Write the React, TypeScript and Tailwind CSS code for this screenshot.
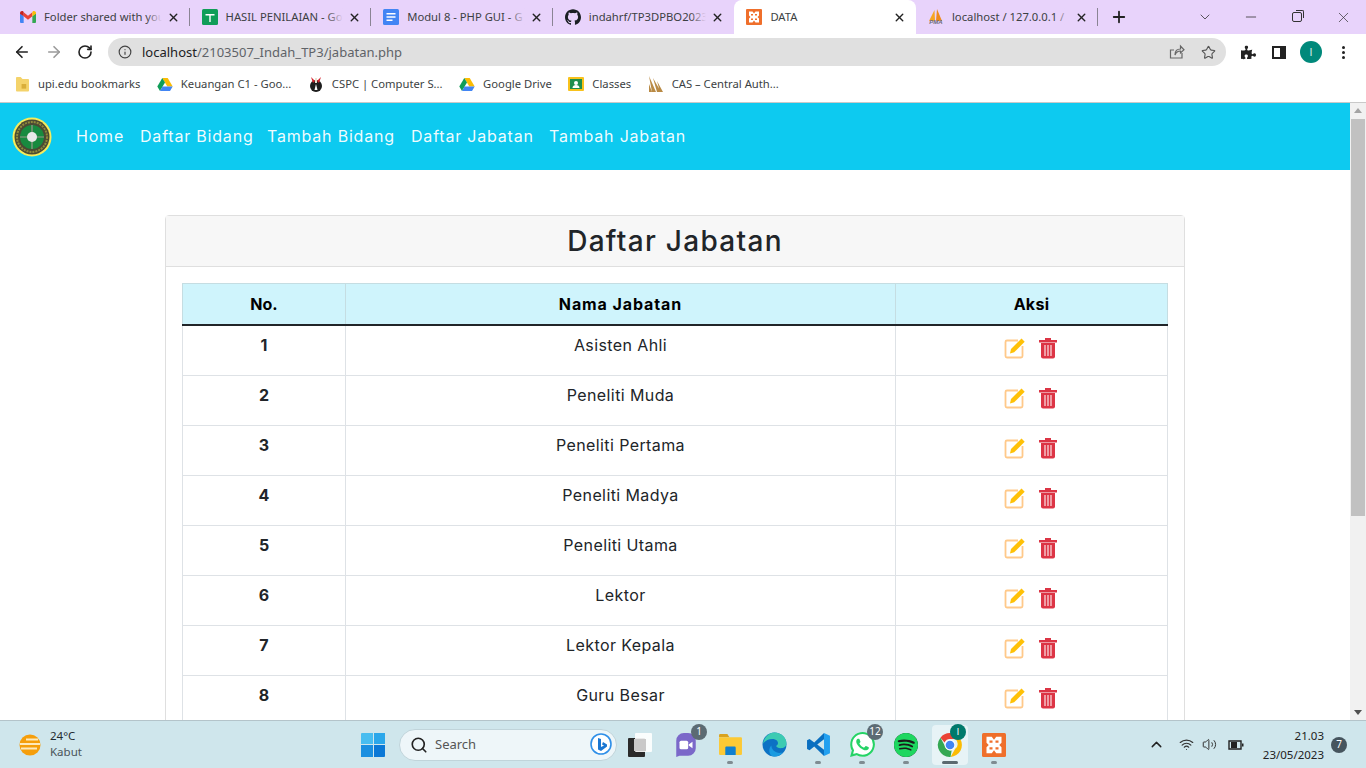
import { ReactNode } from 'react';
import { ArrowLeft, ArrowRight, ChevronDown, ChevronUp, Info, Minus, Plus, RotateCw, Search, Star, Volume2, Wifi, X } from 'lucide-react';
import { FaPuzzlePiece } from 'react-icons/fa';
import { SiGithub, SiSpotify, SiWhatsapp } from 'react-icons/si';

const jabatan = [
  'Asisten Ahli',
  'Peneliti Muda',
  'Peneliti Pertama',
  'Peneliti Madya',
  'Peneliti Utama',
  'Lektor',
  'Lektor Kepala',
  'Guru Besar',
];

const navLinks = [
  { label: 'Home', width: 'w-[64px]' },
  { label: 'Daftar Bidang', width: 'w-[127px]' },
  { label: 'Tambah Bidang', width: 'w-[144px]' },
  { label: 'Daftar Jabatan', width: 'w-[138px]' },
  { label: 'Tambah Jabatan', width: 'w-[156px]' },
];

function GmailIcon() {
  return (
    <svg viewBox="0 0 24 18" className="w-4 h-3">
      <path d="M0 3v13.5A1.5 1.5 0 0 0 1.5 18H5.5V8l-5.500-5z" fill="#4285f4" />
      <path d="M24 3v13.500a1.500 1.500 0 0 1-1.500 1.500H18.500V8l5.500-5z" fill="#34a853" />
      <path d="M5.500 8V2L12 7l6.500-5v6L12 13z" fill="#ea4335" />
      <path d="M0 3c0-2.500 3-3.800 5-2.200L5.500 2v6L0 4z" fill="#c5221f" />
      <path d="M24 3c0-2.500-3-3.800-5-2.200L18.500 2v6L24 4z" fill="#fbbc04" />
    </svg>
  );
}

function SheetsIcon() {
  return (
    <svg viewBox="0 0 16 16" className="w-4 h-4">
      <rect width="16" height="16" rx="1.500" fill="#0f9d58" />
      <path d="M3.500 5h9v1.500H8.700V13H7.300V6.500H3.500z" fill="#fff" />
    </svg>
  );
}

function DocsIcon() {
  return (
    <svg viewBox="0 0 16 16" className="w-4 h-4">
      <rect width="16" height="16" rx="1.500" fill="#4285f4" />
      <path d="M3.500 4h9v1.500h-9zM3.500 7.200h9v1.500h-9zM3.500 10.400h6v1.500h-6z" fill="#fff" />
    </svg>
  );
}

function XamppIcon({ big }: { big?: boolean }) {
  return (
    <svg viewBox="0 0 16 16" className={big ? 'w-6 h-6' : 'w-4 h-4'}>
      <rect width="16" height="16" rx="1" fill="#ef6f2b" />
      <path d="M3 2.500h3.500L8 4.500l1.500-2H13v4L11.500 8 13 9.500v4H9.500L8 11.500l-1.500 2H3v-4L4.500 8 3 6.500z" fill="#fff" />
      <path d="M5 5h2v1.500H5zM9 5h2v1.500H9zM5 9.500h2V11H5zM9 9.500h2V11H9z" fill="#ef6f2b" />
    </svg>
  );
}

function PmaIcon() {
  return (
    <span className="relative flex w-[18px] h-4 justify-center">
      <svg viewBox="0 0 18 12" className="w-[18px] h-3">
        <path d="M2 12 7.500 1 8 12z" fill="#f6a623" />
        <path d="M9 12 10 0l5 12z" fill="#ee8a1d" />
      </svg>
      <span className="absolute bottom-[-1px] text-[6px] leading-[7px] font-bold italic text-[#6c6c80] font-['Liberation_Sans',sans-serif]">PMA</span>
    </span>
  );
}

function DriveIcon() {
  return (
    <svg viewBox="0 0 16 15" className="w-4 h-[15px]">
      <path d="M5.300 1h5.400l5 8.500H10.300z" fill="#fbbc04" />
      <path d="M5.300 1 .3 9.500 3 14l5-8.500z" fill="#0f9d58" />
      <path d="M3 14h10l2.700-4.500H5.500z" fill="#4285f4" />
    </svg>
  );
}

function FolderBookmark() {
  return (
    <svg viewBox="0 0 14 16" className="w-[13px] h-4">
      <path d="M0 1.500A1 1 0 0 1 1 .5h4L7 2.500h6a1 1 0 0 1 1 1V15a1 1 0 0 1-1 1H1a1 1 0 0 1-1-1z" fill="#f4d36b" />
      <path d="M6 8h5v5H6z" fill="#d9ae3a" />
    </svg>
  );
}

function CspcIcon() {
  return (
    <svg viewBox="0 0 16 16" className="w-4 h-4">
      <circle cx="8" cy="10" r="6" fill="#1d1d1d" />
      <path d="M3 1l4 4-2 2zM13 1 9 5l2 2z" fill="#d3202a" />
      <path d="M7 2h2v5H7z" fill="#e9e2d0" />
      <path d="M8 8l1.500 6h-3z" fill="#fff" />
    </svg>
  );
}

function ClassesIcon() {
  return (
    <svg viewBox="0 0 16 14" className="w-4 h-3.5">
      <rect width="16" height="14" rx="1" fill="#f8c21c" />
      <rect x="2" y="2" width="12" height="10" fill="#1f8e4d" />
      <circle cx="8" cy="6" r="2" fill="#fff" />
      <path d="M4.500 11c0-2 1.500-3 3.500-3s3.500 1 3.500 3z" fill="#fff" />
    </svg>
  );
}

function CasIcon() {
  return (
    <svg viewBox="0 0 16 16" className="w-4 h-4">
      <path d="M1 0l7 16H4zM5 2l8 14H9zM9 5l6 11h-3zM1 8l3 8H1z" fill="#b98a45" />
    </svg>
  );
}

function ChromeIcon({ size = 'w-[26px] h-[26px]' }: { size?: string }) {
  return (
    <svg viewBox="0 0 24 24" className={size}>
      <path d="M12 1a11 11 0 0 1 9.500 5.500H12a5.500 5.500 0 0 0-5 3.200L3.200 5.200A11 11 0 0 1 12 1z" fill="#ea4335" />
      <path d="M21.500 6.500A11 11 0 0 1 12.500 23l4.300-7.500a5.500 5.500 0 0 0 0-9z" fill="#fbbc04" />
      <path d="M3.200 5.200 8 14a5.500 5.500 0 0 0 5.500 3l-1 6A11 11 0 0 1 3.200 5.200z" fill="#34a853" />
      <circle cx="12" cy="12" r="5" fill="#fff" />
      <circle cx="12" cy="12" r="4" fill="#4285f4" />
    </svg>
  );
}

function EdgeIcon() {
  return (
    <svg viewBox="0 0 24 24" className="w-[25px] h-[25px]">
      <circle cx="12" cy="12" r="11.500" fill="#0c72c4" />
      <path d="M1 11C2.500 4.500 7 .5 12 .5c6.500 0 11.500 5 11.500 10.500 0 3-2.500 4.500-5.500 4.500-2.500 0-4-1-4.500-2 2-1 2.500-3 1-5C12 5.500 5 6 1 11z" fill="#3ccbb2" />
      <path d="M9 13c0 4 4 7.500 9 7 1 0 2-.5 2.500-1-3 5-10 5.500-12 3C6 19 7 15 9 13z" fill="#1a9be0" />
    </svg>
  );
}

function VsCodeIcon() {
  return (
    <svg viewBox="0 0 24 24" className="w-[25px] h-[25px]">
      <path d="M17.300 1 7.900 10 3.400 6.600 1 7.800v8.400l2.400 1.200L7.900 14l9.400 9v-6l-6.500-5 6.500-5z" fill="#0a6fc0" />
      <path d="M17.300 1 23 3.700v16.600L17.300 23z" fill="#22a0f0" />
    </svg>
  );
}

function TeamsIcon() {
  return (
    <svg viewBox="0 0 24 24" className="w-[26px] h-[26px]">
      <path d="M3 8a7 7 0 0 1 7-7h4a7 7 0 0 1 7 7v7a7 7 0 0 1-7 7H6l-3 1z" fill="#7b68c9" />
      <rect x="6" y="8" width="8" height="8" rx="1.500" fill="#fff" />
      <path d="M14.500 11.500l3.500-2.500v6l-3.500-2.500z" fill="#fff" />
    </svg>
  );
}

function ExplorerIcon() {
  return (
    <svg viewBox="0 0 24 24" className="w-[25px] h-[25px]">
      <path d="M1 3a1 1 0 0 1 1-1h7l2 3h-10z" fill="#d9a21f" />
      <rect x="1" y="5" width="22" height="17" rx="1" fill="#fcc934" />
      <path d="M7 15a1 1 0 0 1 1-1h8a1 1 0 0 1 1 1v7H7z" fill="#0f80cf" />
    </svg>
  );
}

function WeatherIcon() {
  return (
    <svg viewBox="0 0 24 24" className="w-[24px] h-[24px]">
      <circle cx="12" cy="12" r="10.500" fill="#f59e0b" />
      <path d="M8 5.500h12v2H8zM2 10h14v2H2zM16 10h6v2h-6zM3 14.500h16v2H3z" fill="#fde9bc" />
    </svg>
  );
}

function StartIcon() {
  return (
    <span className="grid grid-cols-2 gap-[1px] w-[24px] h-[24px]">
      <span className="bg-[#48bdf0] rounded-tl-[1px]" />
      <span className="bg-[#2ba7ea]" />
      <span className="bg-[#1a8fe0]" />
      <span className="bg-[#0a78d6] rounded-br-[1px]" />
    </span>
  );
}

function TaskViewIcon() {
  return (
    <span className="relative block w-[24px] h-[24px]">
      <span className="absolute left-0 bottom-0 w-[17px] h-[19px] bg-[#2a2a2a] rounded-[1px]" />
      <span className="absolute right-0 top-0 w-[17px] h-[19px] bg-white/90 rounded-[1px]" />
      <span className="absolute left-[6px] top-[6px] w-[12px] h-[12px] bg-[#c9c9c9]" />
    </span>
  );
}

function BingIcon() {
  return (
    <svg viewBox="0 0 24 24" className="w-[24px] h-[24px]">
      <circle cx="12" cy="11" r="10" fill="#fff" stroke="#2f8fe8" strokeWidth="1.600" />
      <path d="M9 5l3 1v8l3-1.500-2-1 1-2.500 4 2.500v2L12 18l-3-1.500z" fill="#1a76d2" />
    </svg>
  );
}

function EditIcon() {
  return (
    <svg viewBox="0 0 22 22" className="w-[22px] h-[22px]">
      <path d="M14 3.500H3a1.500 1.500 0 0 0-1.500 1.500v14A1.500 1.500 0 0 0 3 20.500h14a1.500 1.500 0 0 0 1.500-1.500V9" fill="none" stroke="#ffc98a" strokeWidth="1.800" />
      <path d="M6 16.500l1-4.500L17.500 1.500l3.200 3.200L10.200 15.200z" fill="#ffc107" />
    </svg>
  );
}

function TrashIcon() {
  return (
    <svg viewBox="0 0 20 22" className="w-5 h-[22px]">
      <path d="M7 1h6v2h6v2.500H1V3h6z" fill="#dc3545" />
      <path d="M3 6h14v13.500a2 2 0 0 1-2 2H5a2 2 0 0 1-2-2z" fill="#dc3545" />
      <path d="M6.300 8h1.400v11H6.300zM9.300 8h1.400v11H9.300zM12.300 8h1.400v11h-1.400z" fill="#f7c9ce" />
    </svg>
  );
}

function LogoIcon() {
  return (
    <svg viewBox="0 0 40 40" className="w-10 h-10">
      <circle cx="20" cy="20" r="19.500" fill="#f5ec5c" />
      <circle cx="20" cy="20" r="17.500" fill="#4b4a33" />
      <circle cx="20" cy="20" r="15" fill="none" stroke="#8f8a3c" strokeWidth="2" strokeDasharray="2 1" />
      <circle cx="20" cy="20" r="12" fill="#188a3f" />
      <path d="M8 20h24M20 8v24" stroke="#9a9a8a" strokeWidth="1.200" />
      <circle cx="20" cy="20" r="5" fill="#e8e8e8" />
    </svg>
  );
}

function Tab({ icon, title, active, separator }: { icon: ReactNode; title: string; active?: boolean; separator?: boolean }) {
  return (
    <div className={active ? 'flex items-center w-[181.6px] h-[34px] bg-white rounded-t-lg pl-[12px] pr-[10px]' : 'flex items-center w-[181.6px] h-[34px] pl-[12px] pr-[10px] relative'}>
      <span className="flex w-4 justify-center shrink-0">{icon}</span>
      <span className="relative ml-[8px] flex-1 overflow-hidden whitespace-nowrap text-[11.250px] leading-[18px] text-[#3c3f43]">
        {title}
        {!active && <span className="absolute right-0 top-0 h-full w-4 bg-gradient-to-r from-transparent to-[#e8d3fb]" />}
      </span>
      <X className="w-[13px] h-[13px] ml-[5px] shrink-0 text-[#222]" strokeWidth={2.600} />
      {separator && <span className="absolute right-0 top-[8px] h-[18px] w-px bg-[#8a8494]" />}
    </div>
  );
}

function Bookmark({ icon, label }: { icon: ReactNode; label: string }) {
  return (
    <div className="flex items-center gap-2">
      <span className="flex w-4 justify-center">{icon}</span>
      <span className="text-[11.250px] text-[#3c3f43] whitespace-nowrap">{label}</span>
    </div>
  );
}

function TaskbarApp({ children, badge, running, active }: { children: ReactNode; badge?: string; running?: boolean; active?: boolean }) {
  return (
    <div className={active ? 'relative flex w-[36px] h-[40px] mx-1 items-center justify-center rounded bg-white/50' : 'relative flex w-[36px] h-[40px] mx-1 items-center justify-center'}>
      {children}
      {badge && (
        <span className={active ? "absolute -top-[1px] right-[2px] flex h-[16px] min-w-[16px] items-center justify-center rounded-full bg-[#00796b] text-[9px] text-white font-['Inter',sans-serif]" : 'absolute -top-[1px] right-[-3px] flex h-[16px] min-w-[16px] items-center justify-center rounded-full bg-[#5c6b73] px-[2px] text-[10px] text-white'}>
          {badge}
        </span>
      )}
      {running && <span className={active ? 'absolute bottom-[1px] h-[3px] w-[16px] rounded bg-[#5b6a70]' : 'absolute bottom-[1px] h-[3px] w-[6px] rounded bg-[#7f8c92]'} />}
    </div>
  );
}

export default function App() {
  return (
    <div className="flex flex-col h-screen overflow-hidden bg-white font-['Noto_Sans',sans-serif]">
      {/* chrome tab strip */}
      <div className="flex items-center h-[34px] pl-[8px] bg-[#e8d3fb] shrink-0">
        <Tab icon={<GmailIcon />} title="Folder shared with you" separator />
        <Tab icon={<SheetsIcon />} title="HASIL PENILAIAN - Go" separator />
        <Tab icon={<DocsIcon />} title="Modul 8 - PHP GUI - G" separator />
        <Tab icon={<SiGithub className="w-4 h-4 text-[#1b1f23]" />} title="indahrf/TP3DPBO2023" />
        <Tab icon={<XamppIcon />} title="DATA" active />
        <Tab icon={<PmaIcon />} title="localhost / 127.0.0.1 / " separator />
        <Plus className="w-[18px] h-[18px] ml-[12px] text-[#222]" strokeWidth={2.400} />
        <div className="flex flex-1 justify-end text-[#333]">
          <span className="flex w-[46px] justify-center"><ChevronDown className="w-4 h-4" strokeWidth={1.200} /></span>
          <span className="flex w-[46px] justify-center"><Minus className="w-4 h-4" strokeWidth={1.200} /></span>
          <span className="flex w-[46px] justify-center items-center">
            <span className="relative w-[10px] h-[10px] border border-[#333] rounded-[2px] bg-[#e8d3fb]"><span className="absolute -top-[3px] -right-[3px] w-[8px] h-[8px] border-t border-r border-[#333] rounded-tr-[2px]" /></span>
          </span>
          <span className="flex w-[46px] justify-center"><X className="w-[17px] h-[17px]" strokeWidth={1} /></span>
        </div>
      </div>

      {/* address bar */}
      <div className="flex items-center h-[36px] shrink-0 bg-white">
        <div className="flex w-[108px] items-center pl-[13px] gap-[14px]">
          <ArrowLeft className="w-[18px] h-[18px] text-[#222]" strokeWidth={2.200} />
          <ArrowRight className="w-[18px] h-[18px] text-[#9a9a9a]" strokeWidth={2.200} />
          <RotateCw className="w-[16px] h-[16px] text-[#222]" strokeWidth={2.400} />
        </div>
        <div className="flex flex-1 items-center h-[28px] rounded-full bg-[#e0e0e0] pl-[10px] pr-[10px]">
          <Info className="w-[14px] h-[14px] text-[#444]" strokeWidth={2} />
          <span className="ml-[10px] mt-[1px] text-[13px] text-[#5f6368]"><span className="text-[#202124]">localhost</span>/2103507_Indah_TP3/jabatan.php</span>
          <span className="flex-1" />
          <svg viewBox="0 0 16 16" className="w-4 h-4 text-[#666]" fill="none" stroke="currentColor" strokeWidth="1.200">
            <path d="M13 9v5H1.500V6H5" />
            <path d="M6 11c0-4 2-6 5.500-6V2L15 5.800 11.500 9V7C9 7 7 8.500 6 11z" />
          </svg>
          <Star className="w-[15px] h-[15px] ml-[16px] text-[#555]" strokeWidth={1.800} />
        </div>
        <div className="flex w-[140px] items-center pl-[15px]">
          <FaPuzzlePiece className="w-[15px] h-[15px] text-[#222]" />
          <span className="ml-[16px] flex w-[14px] h-[13px] border-2 border-[#222] justify-end"><span className="w-[4px] h-full bg-[#222]" /></span>
          <span className="ml-[14px] flex w-[22px] h-[22px] items-center justify-center rounded-full bg-[#00897b] text-[11px] text-white/80 font-['Inter',sans-serif]">I</span>
          <span className="ml-[20px] flex flex-col gap-[2px]">
            <span className="w-[3px] h-[3px] rounded-full bg-[#222]" />
            <span className="w-[3px] h-[3px] rounded-full bg-[#222]" />
            <span className="w-[3px] h-[3px] rounded-full bg-[#222]" />
          </span>
        </div>
      </div>

      {/* bookmarks */}
      <div className="flex items-center h-[28px] shrink-0 pl-[14px] pb-[4px] gap-[16.500px] bg-white border-b border-[#c9c9c9] box-content">
        <Bookmark icon={<FolderBookmark />} label="upi.edu bookmarks" />
        <Bookmark icon={<DriveIcon />} label="Keuangan C1 - Goo..." />
        <Bookmark icon={<CspcIcon />} label="CSPC | Computer S..." />
        <Bookmark icon={<DriveIcon />} label="Google Drive" />
        <Bookmark icon={<ClassesIcon />} label="Classes" />
        <Bookmark icon={<CasIcon />} label="CAS – Central Auth..." />
      </div>

      {/* page with scrollbar */}
      <div className="flex flex-1 min-h-0">
        <div className="flex-1 min-w-0 overflow-hidden font-['Inter',sans-serif] text-[#212529]">
          <nav className="flex items-center h-[67px] bg-[#0dcaf0] pl-[12px]">
            <LogoIcon />
            <div className="flex ml-[16px] mb-[2px]">
              {navLinks.map((link) => (
                <a key={link.label} className={`${link.width} px-[8px] text-[16px] tracking-[0.8px] text-white/95 whitespace-nowrap`}>{link.label}</a>
              ))}
            </div>
          </nav>

          <div className="w-[1020px] ml-[165px] mt-[45px] border border-[#dfdfdf] rounded">
            <div className="h-[51px] flex items-center justify-center bg-[#f7f7f7] border-b border-[#dfdfdf] text-[28px] font-medium tracking-[1.300px]">
              Daftar Jabatan
            </div>
            <div className="p-[16px]">
              <table className="w-[986px] table-fixed border-collapse text-center text-[16px]">
                <thead>
                  <tr className="h-[41px] bg-[#cff4fc] text-black border-b-2 border-[#212529]">
                    <th className="w-[163px] border border-b-0 border-[#c5dde2] font-bold">No.</th>
                    <th className="w-[550px] border border-b-0 border-[#c5dde2] font-bold tracking-[0.9px]">Nama Jabatan</th>
                    <th className="border border-b-0 border-[#c5dde2] font-bold tracking-[0.3px]">Aksi</th>
                  </tr>
                </thead>
                <tbody>
                  {jabatan.map((nama, i) => (
                    <tr key={nama} className={i === 0 ? 'h-[51px] border-b border-[#dee2e6]' : 'h-[50px] border-b border-[#dee2e6]'}>
                      <td className="border-x border-[#dee2e6] align-top pt-[7px] font-bold">{i + 1}</td>
                      <td className="border-x border-[#dee2e6] align-top pt-[7px] tracking-[0.4px]">{nama}</td>
                      <td className="border-x border-[#dee2e6] align-top pt-[11px]">
                        <div className="flex justify-center gap-[12px] pr-[1px]">
                          <EditIcon />
                          <TrashIcon />
                        </div>
                      </td>
                    </tr>
                  ))}
                </tbody>
              </table>
            </div>
          </div>
        </div>
        <div className="flex flex-col items-center w-[16px] bg-[#f1f1f1] shrink-0">
          <span className="mt-[5px] w-0 h-0 border-x-[4px] border-x-transparent border-b-[5px] border-b-[#a3a3a3]" />
          <span className="mt-[6px] w-[14px] h-[397px] bg-[#c1c1c1]" />
          <span className="flex-1" />
          <span className="mb-[5px] w-0 h-0 border-x-[4px] border-x-transparent border-t-[5px] border-t-[#505050]" />
        </div>
      </div>

      {/* windows taskbar */}
      <div className="flex items-center h-[48px] shrink-0 bg-[#cfe6ec] border-t border-[#b4c4ca] text-[#1f2a30] box-border">
        <div className="flex items-center w-[351px] pl-[18px] gap-[8px]">
          <WeatherIcon />
          <div className="text-[11.500px] leading-[16px] pb-[2px]">
            <div>24°C</div>
            <div className="text-[#4a5459]">Kabut</div>
          </div>
        </div>
        <div className="flex w-[44px] justify-center"><StartIcon /></div>
        <div className="ml-[4px] flex items-center w-[218px] h-[32px] rounded-full bg-[#eef6f9] border border-[#c0d4da] pl-[10px] pr-[3px]">
          <Search className="w-[18px] h-[18px] text-[#222]" strokeWidth={2.200} />
          <span className="ml-[7px] flex-1 text-[13px] text-[#555]">Search</span>
          <BingIcon />
        </div>
        <div className="ml-[11px] flex w-[24px] justify-center"><TaskViewIcon /></div>
        <div className="ml-[12px] flex">
          <TaskbarApp badge="1"><TeamsIcon /></TaskbarApp>
          <TaskbarApp running><ExplorerIcon /></TaskbarApp>
          <TaskbarApp><EdgeIcon /></TaskbarApp>
          <TaskbarApp running><VsCodeIcon /></TaskbarApp>
          <TaskbarApp badge="12" running><span className="rounded-full bg-white"><SiWhatsapp className="w-[25px] h-[25px] text-[#25d366]" /></span></TaskbarApp>
          <TaskbarApp running><span className="rounded-full bg-[#1b1b1b]"><SiSpotify className="w-[24px] h-[24px] text-[#1ed760]" /></span></TaskbarApp>
          <TaskbarApp badge="I" running active><ChromeIcon /></TaskbarApp>
          <TaskbarApp running><XamppIcon big /></TaskbarApp>
        </div>
        <div className="flex flex-1 items-center justify-end pr-[19px]">
          <ChevronUp className="w-[17px] h-[17px] text-[#222]" strokeWidth={2} />
          <Wifi className="ml-[14px] w-[15px] h-[15px] text-[#333]" strokeWidth={1.800} />
          <Volume2 className="ml-[8px] w-[15px] h-[15px] text-[#333]" strokeWidth={1.600} />
          <svg viewBox="0 0 16 12" className="ml-[11px] w-[16px] h-[12px] text-[#222]">
            <path d="M1 2h12v8H1z" fill="none" stroke="currentColor" strokeWidth="1.400" />
            <path d="M3 3h6v6H3zM14 4.500h1.500v3H14z" fill="currentColor" />
          </svg>
          <div className="ml-[19px] text-right text-[11.500px] leading-[19px] text-[#222]">
            <div>21.03</div>
            <div>23/05/2023</div>
          </div>
          <span className="ml-[7px] flex w-[16px] h-[16px] items-center justify-center rounded-full bg-[#46555e] text-[10px] text-white">7</span>
        </div>
      </div>
    </div>
  );
}
